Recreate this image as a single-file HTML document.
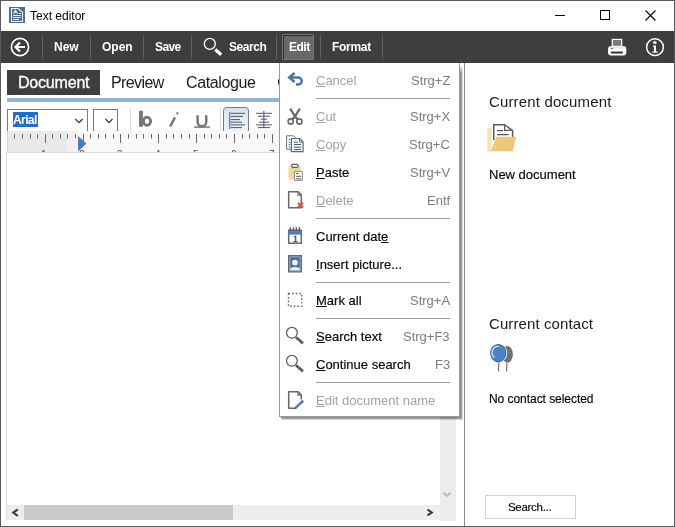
<!DOCTYPE html>
<html><head><meta charset="utf-8">
<style>
*{margin:0;padding:0;box-sizing:border-box}
html,body{width:675px;height:527px;overflow:hidden;background:#fff}
body{-webkit-font-smoothing:antialiased;position:relative;font-family:"Liberation Sans",sans-serif;color:#000}
.a{position:absolute}
.t{position:absolute;white-space:nowrap;line-height:1;will-change:transform}
.tb{color:#fff;font-weight:bold;font-size:12px}
.sep{position:absolute;top:34px;width:1px;height:26px;background:linear-gradient(#4a4a4a,#646464 15%,#646464 85%,#4a4a4a)}
.mi{position:absolute;left:316px;font-size:13px;color:#a3a3a3}
.mi.en{color:#000;-webkit-text-stroke:0.15px #000}
.sc{position:absolute;right:225px;font-size:13px;color:#7c7c7c;text-align:right}
.msep{position:absolute;left:316px;width:134px;height:1px;background:#a0a0a0}
u{text-decoration:underline;text-underline-offset:0.5px;text-decoration-thickness:1px}
</style></head><body>
<!-- window border -->
<div class="a" style="left:0;top:0;width:675px;height:527px;border:1px solid #5a5a5a"></div>

<!-- title bar -->
<svg class="a" style="left:9px;top:7px" width="16" height="16" viewBox="0 0 16 16">
<rect x="0" y="0" width="16" height="16" fill="#4f6d8a"/>
<path d="M2.5 1.5H9.3L13.5 5.2V14.5H2.5Z" fill="none" stroke="#eef6fc" stroke-width="1.1"/>
<path d="M4.5 6.6L6.5 3.2L8.5 6.6M5.3 5.4h2.4" stroke="#d6e6f4" fill="none" stroke-width="1.1"/>
<path d="M10 6.5h2M4 8.5h7.5M4 10.5h7.5M4 12.5h6" stroke="#eef6fc" stroke-width="1"/>
<circle cx="11" cy="3.6" r="0.7" fill="#eef6fc"/>
</svg>
<div class="t" style="left:30px;top:10px;font-size:12px;color:#000">Text editor</div>
<!-- window controls -->
<div class="a" style="left:555px;top:15px;width:10px;height:1px;background:#000"></div>
<div class="a" style="left:600px;top:10px;width:10px;height:10px;border:1px solid #000"></div>
<svg class="a" style="left:645px;top:10px" width="11" height="11" viewBox="0 0 11 11"><path d="M0.5 0.5L10.5 10.5M10.5 0.5L0.5 10.5" stroke="#000" stroke-width="1.1"/></svg>

<!-- toolbar -->
<div class="a" style="left:1px;top:31px;width:673px;height:32px;background:#3e3e3e"></div>
<svg class="a" style="left:10px;top:37px" width="20" height="20" viewBox="0 0 20 20">
<circle cx="10" cy="10" r="8.6" fill="none" stroke="#fff" stroke-width="1.6"/>
<path d="M15 10H6M10 5.5L5.5 10L10 14.5" fill="none" stroke="#fff" stroke-width="2.2"/>
</svg>
<div class="sep" style="left:42px"></div>
<div class="t tb" style="left:54px;top:41px">New</div>
<div class="sep" style="left:90px"></div>
<div class="t tb" style="left:102px;top:41px">Open</div>
<div class="sep" style="left:143px"></div>
<div class="t tb" style="left:155px;top:41px;letter-spacing:-0.6px">Save</div>
<div class="sep" style="left:191px"></div>
<svg class="a" style="left:203px;top:37px" width="20" height="20" viewBox="0 0 20 20">
<circle cx="6.8" cy="6.9" r="5.5" fill="none" stroke="#fff" stroke-width="1.35"/>
<path d="M12.2 12.6L18.2 17.7" stroke="#fff" stroke-width="3.3"/>
</svg>
<div class="t tb" style="left:229px;top:41px;letter-spacing:-0.45px">Search</div>
<div class="sep" style="left:276px"></div>
<div class="a" style="left:282px;top:34px;width:32px;height:26px;background:#686868;border:1px solid #767676;box-shadow:inset 1px 1px 0 #2c2c2c;border-radius:1px"></div>
<div class="t tb" style="left:289px;top:41px;letter-spacing:-0.5px">Edit</div>
<div class="sep" style="left:320px"></div>
<div class="t tb" style="left:332px;top:41px;letter-spacing:-0.3px">Format</div>
<div class="sep" style="left:382px"></div>
<!-- printer -->
<svg class="a" style="left:607px;top:38px" width="20" height="18" viewBox="0 0 20 18">
<rect x="5.3" y="1.4" width="9.4" height="7" fill="#7a7a7a" stroke="#fff" stroke-width="1.2"/>
<rect x="1" y="8.3" width="18.3" height="9.1" rx="3" fill="#fff"/>
<rect x="1.8" y="8.6" width="16.7" height="2" fill="#e4e4e4"/>
<rect x="3.9" y="13.6" width="11.9" height="1.9" fill="#2e2e2e"/>
<rect x="4.2" y="10" width="1.6" height="1" fill="#444"/>
</svg>
<!-- info -->
<svg class="a" style="left:645px;top:37px" width="20" height="20" viewBox="0 0 20 20">
<circle cx="10" cy="10.1" r="8.4" fill="none" stroke="#fff" stroke-width="1.5"/>
<ellipse cx="9.8" cy="5.5" rx="1.8" ry="1.5" fill="#fff"/>
<path d="M8 8.4h3v6.1h1.6v1.3h-5.2v-1.3h1.5v-4.8h-0.9z" fill="#fff"/>
</svg>

<!-- right panel divider -->
<div class="a" style="left:464px;top:63px;width:1px;height:463px;background:#8a8a8a"></div>

<!-- tabs -->
<div class="a" style="left:7px;top:70px;width:93px;height:25px;background:#3e3e3e"></div>
<div class="t" style="left:18px;top:75px;font-size:16px;color:#fff;letter-spacing:-0.2px;-webkit-text-stroke:0.3px #fff">Document</div>
<div class="t" style="left:111px;top:75px;font-size:16px;color:#1a1a1a;letter-spacing:-0.6px">Preview</div>
<div class="t" style="left:186px;top:75px;font-size:16px;color:#1a1a1a;letter-spacing:-0.38px">Catalogue</div>
<div class="a" style="left:278px;top:79px;width:1px;height:6px;background:linear-gradient(#bbb,#222 30%,#222 70%,#bbb)"></div>
<div class="a" style="left:7px;top:98px;width:450px;height:4px;background:#92b4da"></div>

<!-- font toolbar -->
<div class="a" style="left:7px;top:109px;width:81px;height:23px;border:1px solid #7a7a7a;background:#fff"></div>
<div class="a" style="left:13px;top:112px;width:25px;height:15px;background:#1f6fc9"></div>
<div class="t" style="left:13px;top:114px;font-size:12px;color:#fff;font-weight:bold;letter-spacing:-0.6px">Arial</div>
<svg class="a" style="left:74px;top:117px" width="10" height="7" viewBox="0 0 10 7"><path d="M1.2 2L5 5.6L8.7 2" fill="none" stroke="#333" stroke-width="1.25"/></svg>
<div class="a" style="left:93px;top:109px;width:25px;height:23px;border:1px solid #7a7a7a;background:#fff"></div>
<svg class="a" style="left:104px;top:117px" width="10" height="7" viewBox="0 0 10 7"><path d="M1.5 2L5 5.6L8.5 2" fill="none" stroke="#333" stroke-width="1.25"/></svg>
<div class="a" style="left:130px;top:108px;width:1px;height:23px;background:#dcdcdc"></div>
<svg class="a" style="left:132px;top:105px" width="90" height="26" viewBox="0 0 90 26">
<path d="M7 5.8h3.9v15.9H7z" fill="#767676"/>
<ellipse cx="15" cy="16.25" rx="3.6" ry="4.1" fill="none" stroke="#767676" stroke-width="2.9"/>
<path d="M38.2 21.3L43 12.4" stroke="#767676" stroke-width="2.5"/>
<path d="M44.3 8.9L46.2 7.9" stroke="#767676" stroke-width="2.2"/>
<path d="M65.6 10.3V17A4.3 4.3 0 0 0 74.2 17V10.3" fill="none" stroke="#767676" stroke-width="2.5"/>
<path d="M62.1 22.1h15.8" stroke="#767676" stroke-width="1.5"/>
</svg>
<div class="a" style="left:220px;top:108px;width:1px;height:23px;background:#dcdcdc"></div>
<svg class="a" style="left:222px;top:106px" width="56" height="25" viewBox="0 0 56 25">
<defs><linearGradient id="bg1" x1="0" y1="0" x2="0" y2="1"><stop offset="0" stop-color="#d6e3f2"/><stop offset="1" stop-color="#eef3fa"/></linearGradient></defs>
<path d="M1.5 25V4.5A3 3 0 0 1 4.5 1.5H23.5A3 3 0 0 1 26.5 4.5V25" fill="url(#bg1)" stroke="#6f7c8c" stroke-width="1"/>
<path d="M7.7 6v17" stroke="#5a86b8" stroke-width="1.5"/>
<path d="M9 7.3h14M9 10.4h12M9 13.6h9M9 16.2h11M9 18.9h14M9 21.6h11" stroke="#555" stroke-width="1"/>
<path d="M41.8 5v17" stroke="#6f9ac6" stroke-width="1.6"/>
<path d="M34 7.3h16M36 10.2h12M39 13.2h6M37 16.2h10M34 18.9h16M36 21.6h12" stroke="#555" stroke-width="1"/>
</svg>
<!-- ruler -->
<div class="a" style="left:7px;top:131px;width:433px;height:22px;overflow:hidden;background:linear-gradient(90deg,#e9e9e9 0,#e9e9e9 58px,#eef2f7 62px,#f7efe6 70px,#f8f8f8 72px,#f8f8f8 100%)">
<svg class="a" style="left:0;top:0" width="433" height="22"><path d="M7.5 3v4.5M15.5 3v4.5M23.5 3v4.5M30.5 3v4.5M38.5 3v9M45.5 3v4.5M53.5 3v4.5M60.5 3v4.5M68.5 3v4.5M76.5 3v9M83.5 3v4.5M91.5 3v4.5M98.5 3v4.5M106.5 3v4.5M113.5 3v9M121.5 3v4.5M129.5 3v4.5M136.5 3v4.5M144.5 3v4.5M151.5 3v9M159.5 3v4.5M166.5 3v4.5M174.5 3v4.5M182.5 3v4.5M189.5 3v9M197.5 3v4.5M204.5 3v4.5M212.5 3v4.5M219.5 3v4.5M227.5 3v9M235.5 3v4.5M242.5 3v4.5M250.5 3v4.5M257.5 3v4.5M265.5 3v9M272.5 3v4.5M280.5 3v4.5M287.5 3v4.5M295.5 3v4.5M303.5 3v9M310.5 3v4.5M318.5 3v4.5M325.5 3v4.5M333.5 3v4.5M340.5 3v9M348.5 3v4.5M356.5 3v4.5M363.5 3v4.5M371.5 3v4.5M378.5 3v9M386.5 3v4.5M393.5 3v4.5M401.5 3v4.5M409.5 3v4.5M416.5 3v9M424.5 3v4.5M431.5 3v4.5" stroke="#686868" stroke-width="1"/></svg>
<div class="t" style="left:34.4px;top:18.5px;font-size:10px;color:#444">1</div><div class="t" style="left:72.2px;top:18.5px;font-size:10px;color:#444">2</div><div class="t" style="left:110.1px;top:18.5px;font-size:10px;color:#444">3</div><div class="t" style="left:148.0px;top:18.5px;font-size:10px;color:#444">4</div><div class="t" style="left:185.8px;top:18.5px;font-size:10px;color:#444">5</div><div class="t" style="left:223.7px;top:18.5px;font-size:10px;color:#444">6</div><div class="t" style="left:261.5px;top:18.5px;font-size:10px;color:#444">7</div><div class="t" style="left:299.3px;top:18.5px;font-size:10px;color:#444">8</div><div class="t" style="left:337.2px;top:18.5px;font-size:10px;color:#444">9</div><div class="t" style="left:375.1px;top:18.5px;font-size:10px;color:#444">10</div><div class="t" style="left:412.9px;top:18.5px;font-size:10px;color:#444">11</div>
<div class="a" style="left:0;top:21px;width:433px;height:1px;background:#cfcfcf"></div>
<div class="a" style="left:0;top:0;width:1px;height:22px;background:#d6d6d6"></div>
</div>
<svg class="a" style="left:78px;top:136px" width="9" height="16" viewBox="0 0 9 16"><path d="M0 0L8.5 7.5L0 15.5z" fill="#4a7fbf"/></svg>
<!-- doc area -->
<div class="a" style="left:6px;top:152px;width:1px;height:369px;background:#dcdcdc"></div>
<div class="a" style="left:7px;top:152px;width:449px;height:1px;background:#dcdcdc"></div>
<!-- v scrollbar -->
<div class="a" style="left:440px;top:153px;width:16px;height:368px;background:#ececec"></div>
<svg class="a" style="left:442px;top:491px" width="10" height="7" viewBox="0 0 10 7"><path d="M1.2 1.5L4.8 5L8.4 1.5" fill="none" stroke="#bdbdbd" stroke-width="2"/></svg>
<!-- h scrollbar -->
<div class="a" style="left:7px;top:505px;width:433px;height:15px;background:#eeeeee"></div>
<div class="a" style="left:24px;top:505px;width:209px;height:15px;background:#c9c9c9"></div>
<svg class="a" style="left:11px;top:508px" width="8" height="10" viewBox="0 0 8 10"><path d="M6.8 1.3L2.2 4.6L6.8 7.9" fill="none" stroke="#3c3c3c" stroke-width="2.1"/></svg>
<svg class="a" style="left:426px;top:508px" width="8" height="10" viewBox="0 0 8 10"><path d="M1.5 1.6L5.8 4.5L1.5 7.4" fill="none" stroke="#3c3c3c" stroke-width="2.1"/></svg>

<!-- right panel -->
<div class="t" style="left:489px;top:94px;font-size:15px;color:#1a1a1a;letter-spacing:0.15px">Current document</div>
<svg class="a" style="left:484px;top:120px" width="36" height="36" viewBox="0 0 36 36">
<path d="M4 8.2H7.6V31.4H4.6A1 1 0 0 1 3.3 30.4V9Z" fill="#f4e2b6"/>
<path d="M9.8 20V4.7H20.6L28.6 10.6V17" fill="#fff" stroke="#5a5a5a" stroke-width="1.5"/>
<path d="M20.6 4.7V10.4H28.6" fill="none" stroke="#5a5a5a" stroke-width="1.2"/>
<path d="M13 10.6h6M13 14.7h11.6" stroke="#555" stroke-width="1.3"/>
<path d="M12.4 16.8H32.2L28.7 31.2H6.6Z" fill="#eec878"/>
</svg>
<div class="t" style="left:489px;top:168px;font-size:13px;color:#000;-webkit-text-stroke:0.15px #000">New document</div>
<div class="t" style="left:489px;top:316px;font-size:15px;color:#1a1a1a;letter-spacing:0.1px">Current contact</div>
<svg class="a" style="left:484px;top:340px" width="36" height="36" viewBox="0 0 36 36">
<ellipse cx="23.4" cy="14.3" rx="5.5" ry="8.3" fill="#727272"/>
<path d="M22.5 22.5C24 25 21.8 27.5 22.8 31.5" fill="none" stroke="#6a6a6a" stroke-width="1.1"/>
<ellipse cx="14.3" cy="13" rx="9" ry="9.7" fill="#fff"/>
<ellipse cx="14.3" cy="13" rx="7.7" ry="8.5" fill="#4a84c4" stroke="#3c6a9c" stroke-width="1.1"/>
<path d="M10.2 17.5A5.6 6.2 0 0 1 14.8 6.6" fill="none" stroke="#d2e6f7" stroke-width="1.3"/>
<path d="M12.6 22.6h3.4l-1.7-1.4z" fill="#3c6a9c"/>
<path d="M14.8 23.3C15.8 25.8 13 27.5 15 31.5" fill="none" stroke="#6a6a6a" stroke-width="1.1"/>
</svg>
<div class="t" style="left:489px;top:393px;font-size:12px;color:#000;-webkit-text-stroke:0.15px #000;letter-spacing:-0.05px">No contact selected</div>
<div class="a" style="left:485px;top:495px;width:91px;height:24px;border:1px solid #d2d2d2;background:#fff"></div>
<div class="t" style="left:508px;top:502px;font-size:11.5px;color:#000;-webkit-text-stroke:0.15px #000;letter-spacing:-0.3px">Search...</div>

<!-- menu -->
<div class="a" style="left:279px;top:63px;width:181px;height:354px;background:#fff;border:1px solid #9a9a9a;border-top:none;box-shadow:1px 1px 0 rgba(0,0,0,0.12),2px 2px 0 rgba(0,0,0,0.26),3px 3px 1px rgba(0,0,0,0.15)"></div>
<div class="a" style="left:460px;top:63px;width:3px;height:10px;background:linear-gradient(#fff 25%,rgba(255,255,255,0))"></div>
<div id="menu"><svg class="a" style="left:284px;top:68px" width="24" height="24" viewBox="0 0 24 24"><path d="M10.6 5L5.2 9.5L10.6 14" fill="none" stroke="#4773a6" stroke-width="2.5"/><path d="M5.6 9.5H14.2A3.5 3.5 0 0 1 14.2 16.5H12" fill="none" stroke="#4773a6" stroke-width="2.5"/></svg>
<div class="t mi" style="top:74px"><u>C</u>ancel</div>
<div class="t sc" style="top:74px">Strg+Z</div>
<svg class="a" style="left:284px;top:104px" width="24" height="24" viewBox="0 0 24 24"><path d="M6.2 4.6L11.5 13.2L13.8 15.2M15.8 4.6L10.5 13.2L8.2 15.2" fill="none" stroke="#676767" stroke-width="2.2"/><circle cx="6.7" cy="17.5" r="2.6" fill="none" stroke="#676767" stroke-width="1.6"/><circle cx="15.4" cy="17.5" r="2.6" fill="none" stroke="#676767" stroke-width="1.6"/></svg>
<div class="t mi" style="top:110px"><u>C</u>ut</div>
<div class="t sc" style="top:110px">Strg+X</div>
<svg class="a" style="left:284px;top:132px" width="24" height="24" viewBox="0 0 24 24"><path d="M2.6 3.8H9.5L11.3 5.6V17.2H2.6Z" fill="#fff" stroke="#707070" stroke-width="1"/><path d="M4.8 7.6h1.4M4.8 10.4h1.4M4.8 12.5h1.4M4.8 15h1.4" stroke="#555" stroke-width="1"/><path d="M7.4 6.5H15.8L19.1 9.8V19.7H7.4Z" fill="#f4f8fc" stroke="#5a6f88" stroke-width="1.2"/><path d="M15.5 6.6V10H19" fill="none" stroke="#5a6f88" stroke-width="1"/><path d="M10 10.2h4M10 12.5h7M10 15.2h7M10 17.6h7" stroke="#4e5866" stroke-width="1"/></svg>
<div class="t mi" style="top:138px"><u>C</u>opy</div>
<div class="t sc" style="top:138px">Strg+C</div>
<svg class="a" style="left:284px;top:160px" width="24" height="24" viewBox="0 0 24 24"><path d="M4.6 6.3H16.7V19.6H4.6Z" fill="#f0d89a"/><rect x="7.6" y="4.3" width="6.5" height="3" rx="1.2" fill="#fff" stroke="#5a5a5a" stroke-width="1.2"/><path d="M10.5 11.4H18.3V20.4H10.5Z" fill="#fff" stroke="#8a8a9a" stroke-width="1"/><path d="M12.2 13.5h2.5M12.2 16.3h5M12.2 18.9h5" stroke="#555" stroke-width="1"/></svg>
<div class="t mi en" style="top:166px"><u>P</u>aste</div>
<div class="t sc" style="top:166px">Strg+V</div>
<svg class="a" style="left:284px;top:188px" width="24" height="24" viewBox="0 0 24 24"><path d="M4.7 3.8H14.2L17.3 6.9V19.8H4.7Z" fill="#fff" stroke="#686868" stroke-width="1.5"/><path d="M14 4.2V7.2H17" fill="none" stroke="#686868" stroke-width="1.3"/><path d="M13.9 14.9L19.1 19.3M19.1 14.9L13.9 19.3" stroke="#d2553a" stroke-width="2"/></svg>
<div class="t mi" style="top:194px"><u>D</u>elete</div>
<div class="t sc" style="top:194px">Entf</div>
<svg class="a" style="left:284px;top:224px" width="24" height="24" viewBox="0 0 24 24"><path d="M4.7 6.2H17.3V19.3H4.7Z" fill="#fff" stroke="#6a6a6a" stroke-width="1.5"/><path d="M4.2 7.1H17.8V10.6H4.2Z" fill="#4a7db5"/><path d="M6.3 3.3V7.3M9.4 3.3V7.3M12.3 3.3V7.3M15.4 3.3V7.3" stroke="#555" stroke-width="1.3"/><path d="M9.8 13L11.6 12.2V17.4M9.5 17.6H13.6" fill="none" stroke="#555" stroke-width="1.3"/></svg>
<div class="t mi en" style="top:230px">Current dat<u>e</u></div>
<svg class="a" style="left:284px;top:252px" width="24" height="24" viewBox="0 0 24 24"><path d="M4.6 3.7H17.4V19.9H4.6Z" fill="#4a6f9c" stroke="#6a6a6a" stroke-width="1.2"/><path d="M5.8 4.9H16.2V18.7H5.8Z" fill="none" stroke="#a9c4e0" stroke-width="0.8"/><circle cx="10.9" cy="10.6" r="2.9" fill="#eef6fc"/><path d="M6.3 18.3V16.2Q10.9 13.6 15.7 16.2V18.3Z" fill="#eef6fc"/></svg>
<div class="t mi en" style="top:258px"><u>I</u>nsert picture...</div>
<svg class="a" style="left:284px;top:288px" width="24" height="24" viewBox="0 0 24 24"><path d="M4.5 5.5H17.7V18.3H4.5Z" fill="none" stroke="#6e6e6e" stroke-width="1.4" stroke-dasharray="1.7 1.9"/></svg>
<div class="t mi en" style="top:294px"><u>M</u>ark all</div>
<div class="t sc" style="top:294px">Strg+A</div>
<svg class="a" style="left:284px;top:324px" width="24" height="24" viewBox="0 0 24 24"><circle cx="7.9" cy="8.8" r="5.4" fill="none" stroke="#5e5e5e" stroke-width="1.3"/><path d="M12 13.2L19 19.4" stroke="#5e5e5e" stroke-width="2.8"/></svg>
<div class="t mi en" style="top:330px"><u>S</u>earch text</div>
<div class="t sc" style="top:330px">Strg+F3</div>
<svg class="a" style="left:284px;top:352px" width="24" height="24" viewBox="0 0 24 24"><circle cx="7.9" cy="8.8" r="5.4" fill="none" stroke="#5e5e5e" stroke-width="1.3"/><path d="M12 13.2L19 19.4" stroke="#5e5e5e" stroke-width="2.8"/></svg>
<div class="t mi en" style="top:358px"><u>C</u>ontinue search</div>
<div class="t sc" style="top:358px">F3</div>
<svg class="a" style="left:284px;top:388px" width="24" height="24" viewBox="0 0 24 24"><path d="M12.5 20.2H4.7V3.8H14.2L17.3 6.9V11.5" fill="none" stroke="#686868" stroke-width="1.5"/><path d="M14 4.2V7.2H17" fill="none" stroke="#686868" stroke-width="1.3"/><path d="M19.3 12.8L11.9 19.4" stroke="#5a7ea8" stroke-width="2.6"/><path d="M11.9 19.4L11 20.6" stroke="#444" stroke-width="1.2"/></svg>
<div class="t mi" style="top:394px"><u>E</u>dit document name</div>
<div class="msep" style="top:98px"></div>
<div class="msep" style="top:218px"></div>
<div class="msep" style="top:282px"></div>
<div class="msep" style="top:318px"></div>
<div class="msep" style="top:382px"></div></div>
</body></html>
